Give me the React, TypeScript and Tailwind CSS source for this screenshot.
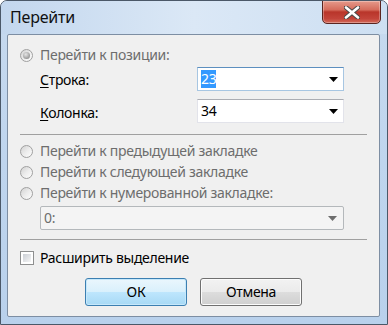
import React from "react";

const Radio = ({ checked = false }: { checked?: boolean }) => (
  <span className="w-[13px] h-[13px] shrink-0 rounded-full border border-[#a0a0a0] bg-gradient-to-br from-[#d2d2d2] via-[#ececec] to-[#fdfdfd] flex items-center justify-center">
    {checked && (
      <span className="w-[7px] h-[7px] rounded-full bg-[radial-gradient(circle_at_40%_35%,#e6e6e6,#9a9a9a_70%,#7d7d7d)]" />
    )}
  </span>
);

const Arrow = ({ color = "#000" }: { color?: string }) => (
  <svg width="9" height="5" viewBox="0 0 9 5" className="shrink-0">
    <path d="M0 0 H9 L4.5 5 Z" fill={color} />
  </svg>
);

export default function App() {
  const font = { fontFamily: '"Noto Sans", "Open Sans", sans-serif' };
  return (
    <div
      className="w-[388px] h-[325px] flex flex-col border border-[#4b5868] rounded-t-[7px] bg-gradient-to-b from-[#c7daef] via-[#bfd5ee] to-[#b9d1ec] overflow-hidden"
      style={font}
    >
      {/* title bar */}
      <div className="h-[33px] flex items-start justify-between bg-gradient-to-r from-[#c3d7ee] via-[#dbe8f6] to-[#cddff2]">
        <div className="pl-[9px] pt-[6px] text-[16px] leading-[20px] text-[#111] tracking-[-0.2px]">Перейти</div>
        <div className="mr-[6px] mt-[-1px] w-[59px] h-[24px] rounded-b-[5px] border border-[#5a2520] bg-[linear-gradient(#e59a8b_0%,#d56c5c_40%,#b9352a_50%,#c3443a_80%,#d36a59_100%)] flex items-center justify-center shadow-[inset_0_0_0_1px_rgba(255,255,255,0.3)]">
          <svg width="16" height="13" viewBox="0 0 16 13">
            <path d="M2 1.5 L14 11.5 M14 1.5 L2 11.5" stroke="#4a4a4a" strokeWidth="4.6" strokeLinecap="round" />
            <path d="M2 1.5 L14 11.5 M14 1.5 L2 11.5" stroke="#ffffff" strokeWidth="2.6" strokeLinecap="round" />
          </svg>
        </div>
      </div>

      {/* client */}
      <div className="ml-[6px] mr-[7px] h-[283px] border border-[#7d8ea3] rounded-[2px] bg-[#f0f0f0] px-[12px] pt-[12px] text-[14px] leading-[16px] tracking-[-0.3px]">
        {/* radio 1 */}
        <div className="h-[16px] flex items-center gap-[7px] text-[#6d6d6d]">
          <Radio checked />
          <span>Перейти к позиции:</span>
        </div>

        <div className="mt-[4px] flex items-center h-[24px] text-[#000]">
          <span className="w-[177px] pl-[20px] pt-[2px]">
            <span className="underline underline-offset-2">С</span>трока:
          </span>
          <div className="w-[147px] h-[24px] bg-white border border-[#a7c6e2] border-t-[#5d8fbf] flex items-center justify-between pl-[3px] pr-[5px]">
            <span className="bg-[#3399ff] text-white leading-[18px]">23</span>
            <Arrow />
          </div>
        </div>

        <div className="mt-[8px] flex items-center h-[24px] text-[#000]">
          <span className="w-[177px] pl-[20px] pt-[4px]">
            <span className="underline underline-offset-2">К</span>олонка:
          </span>
          <div className="w-[147px] h-[24px] bg-white border border-[#e2e3ea] border-t-[#abadb3] flex items-center justify-between pl-[3px] pr-[5px]">
            <span>34</span>
            <Arrow />
          </div>
        </div>

        <div className="mt-[11px] h-px bg-[#a0a0a0]" />

        <div className="mt-[8px] flex flex-col gap-[5px] text-[#6d6d6d]">
          <div className="h-[16px] flex items-center gap-[7px]">
            <Radio />
            <span>Перейти к предыдущей закладке</span>
          </div>
          <div className="h-[16px] flex items-center gap-[7px]">
            <Radio />
            <span>Перейти к следующей закладке</span>
          </div>
          <div className="h-[16px] flex items-center gap-[7px]">
            <Radio />
            <span>Перейти к нумерованной закладке:</span>
          </div>
        </div>

        <div className="mt-[5px] ml-[20px] w-[304px] h-[24px] rounded-[2px] border border-[#b4b8bb] bg-[#f4f4f4] flex items-center justify-between pl-[3px] pr-[6px] text-[#6d6d6d]">
          <span>0:</span>
          <Arrow color="#6d6d6d" />
        </div>

        <div className="mt-[9px] h-px bg-[#a0a0a0]" />

        <div className="mt-[10px] h-[16px] flex items-center gap-[6px] text-[#000]">
          <span className="w-[14px] h-[14px] shrink-0 border border-[#8e8f8f] bg-white p-[2px]">
            <span className="block w-full h-full bg-gradient-to-br from-[#cbcfd5] to-[#f6f6f6]" />
          </span>
          <span>Расширить выделение</span>
        </div>

        <div className="mt-[12px] flex justify-center gap-[13px] text-[#000]">
          <div className="w-[102px] h-[28px] rounded-[3px] border border-[#3c7fb1] bg-[linear-gradient(#eaf6fd_0%,#d9f0fc_49%,#bee6fd_50%,#a7d9f5_100%)] shadow-[inset_0_0_0_1px_#c6e8fb] flex items-center justify-center">
            <span className="-mt-[1px]">ОК</span>
          </div>
          <div className="w-[102px] h-[28px] rounded-[3px] border border-[#707070] bg-[linear-gradient(#f2f2f2_0%,#ebebeb_49%,#dddddd_50%,#cfcfcf_100%)] shadow-[inset_0_0_0_1px_#fcfcfc] flex items-center justify-center">
            <span className="-mt-[1px]">Отмена</span>
          </div>
        </div>
      </div>
    </div>
  );
}
